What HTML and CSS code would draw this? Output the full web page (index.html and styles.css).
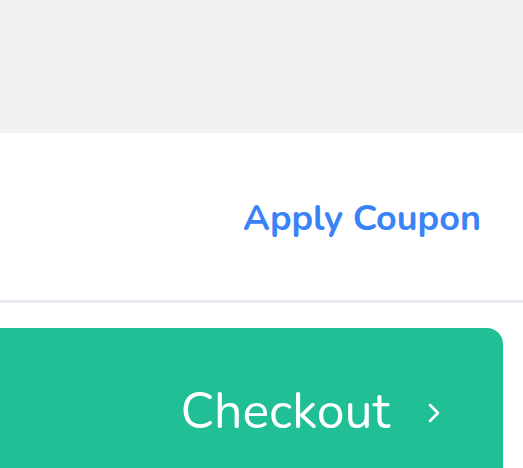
FILE: index.html
```html
<!DOCTYPE html>
<html>
<head>
<meta charset="utf-8">
<link rel="stylesheet" href="styles.css">
</head>
<body>
<div class="top"></div>
<div class="coupon-row">
  <a class="coupon" href="#">Apply Coupon</a>
</div>
<div class="divider"></div>
<div class="footer">
  <button class="checkout">
    <span class="label">Checkout</span>
    <svg class="chev" width="14" height="22" viewBox="0 0 14 22"><path d="M3 3 L11 11 L3 19" fill="none" stroke="#fff" stroke-width="2.6" stroke-linecap="round" stroke-linejoin="round"/></svg>
  </button>
</div>
</body>
</html>
```
FILE: styles.css
```css
html, body {
  margin: 0;
  padding: 0;
  background: #ffffff;
  font-family: "Nunito", "Lato", "Open Sans", sans-serif;
  overflow: hidden;
}
.top {
  height: 133px;
  background: #f1f1f1;
}
.coupon-row {
  height: 167px;
  display: flex;
  align-items: center;
  justify-content: flex-end;
  padding-right: 42px;
  box-sizing: border-box;
}
.coupon {
  color: #3a83f7;
  font-weight: 700;
  font-size: 36px;
  text-decoration: none;
  margin-top: 4px;
}
.divider {
  height: 3px;
  background: #e7eaf0;
}
.footer {
  padding-top: 25px;
  padding-right: 20px;
  margin-left: -30px;
}
.checkout {
  width: 100%;
  height: 140px;
  border: none;
  border-radius: 16px 16px 0 0;
  background: #20bf96;
  color: #ffffff;
  display: flex;
  align-items: flex-start;
  justify-content: flex-end;
  padding: 51px 62px 0 0;
  font-family: inherit;
  box-sizing: border-box;
}
.label {
  font-size: 50px;
  font-weight: 400;
  line-height: 66px;
}
.chev {
  margin-left: 37px;
  margin-top: 23px;
}
```
